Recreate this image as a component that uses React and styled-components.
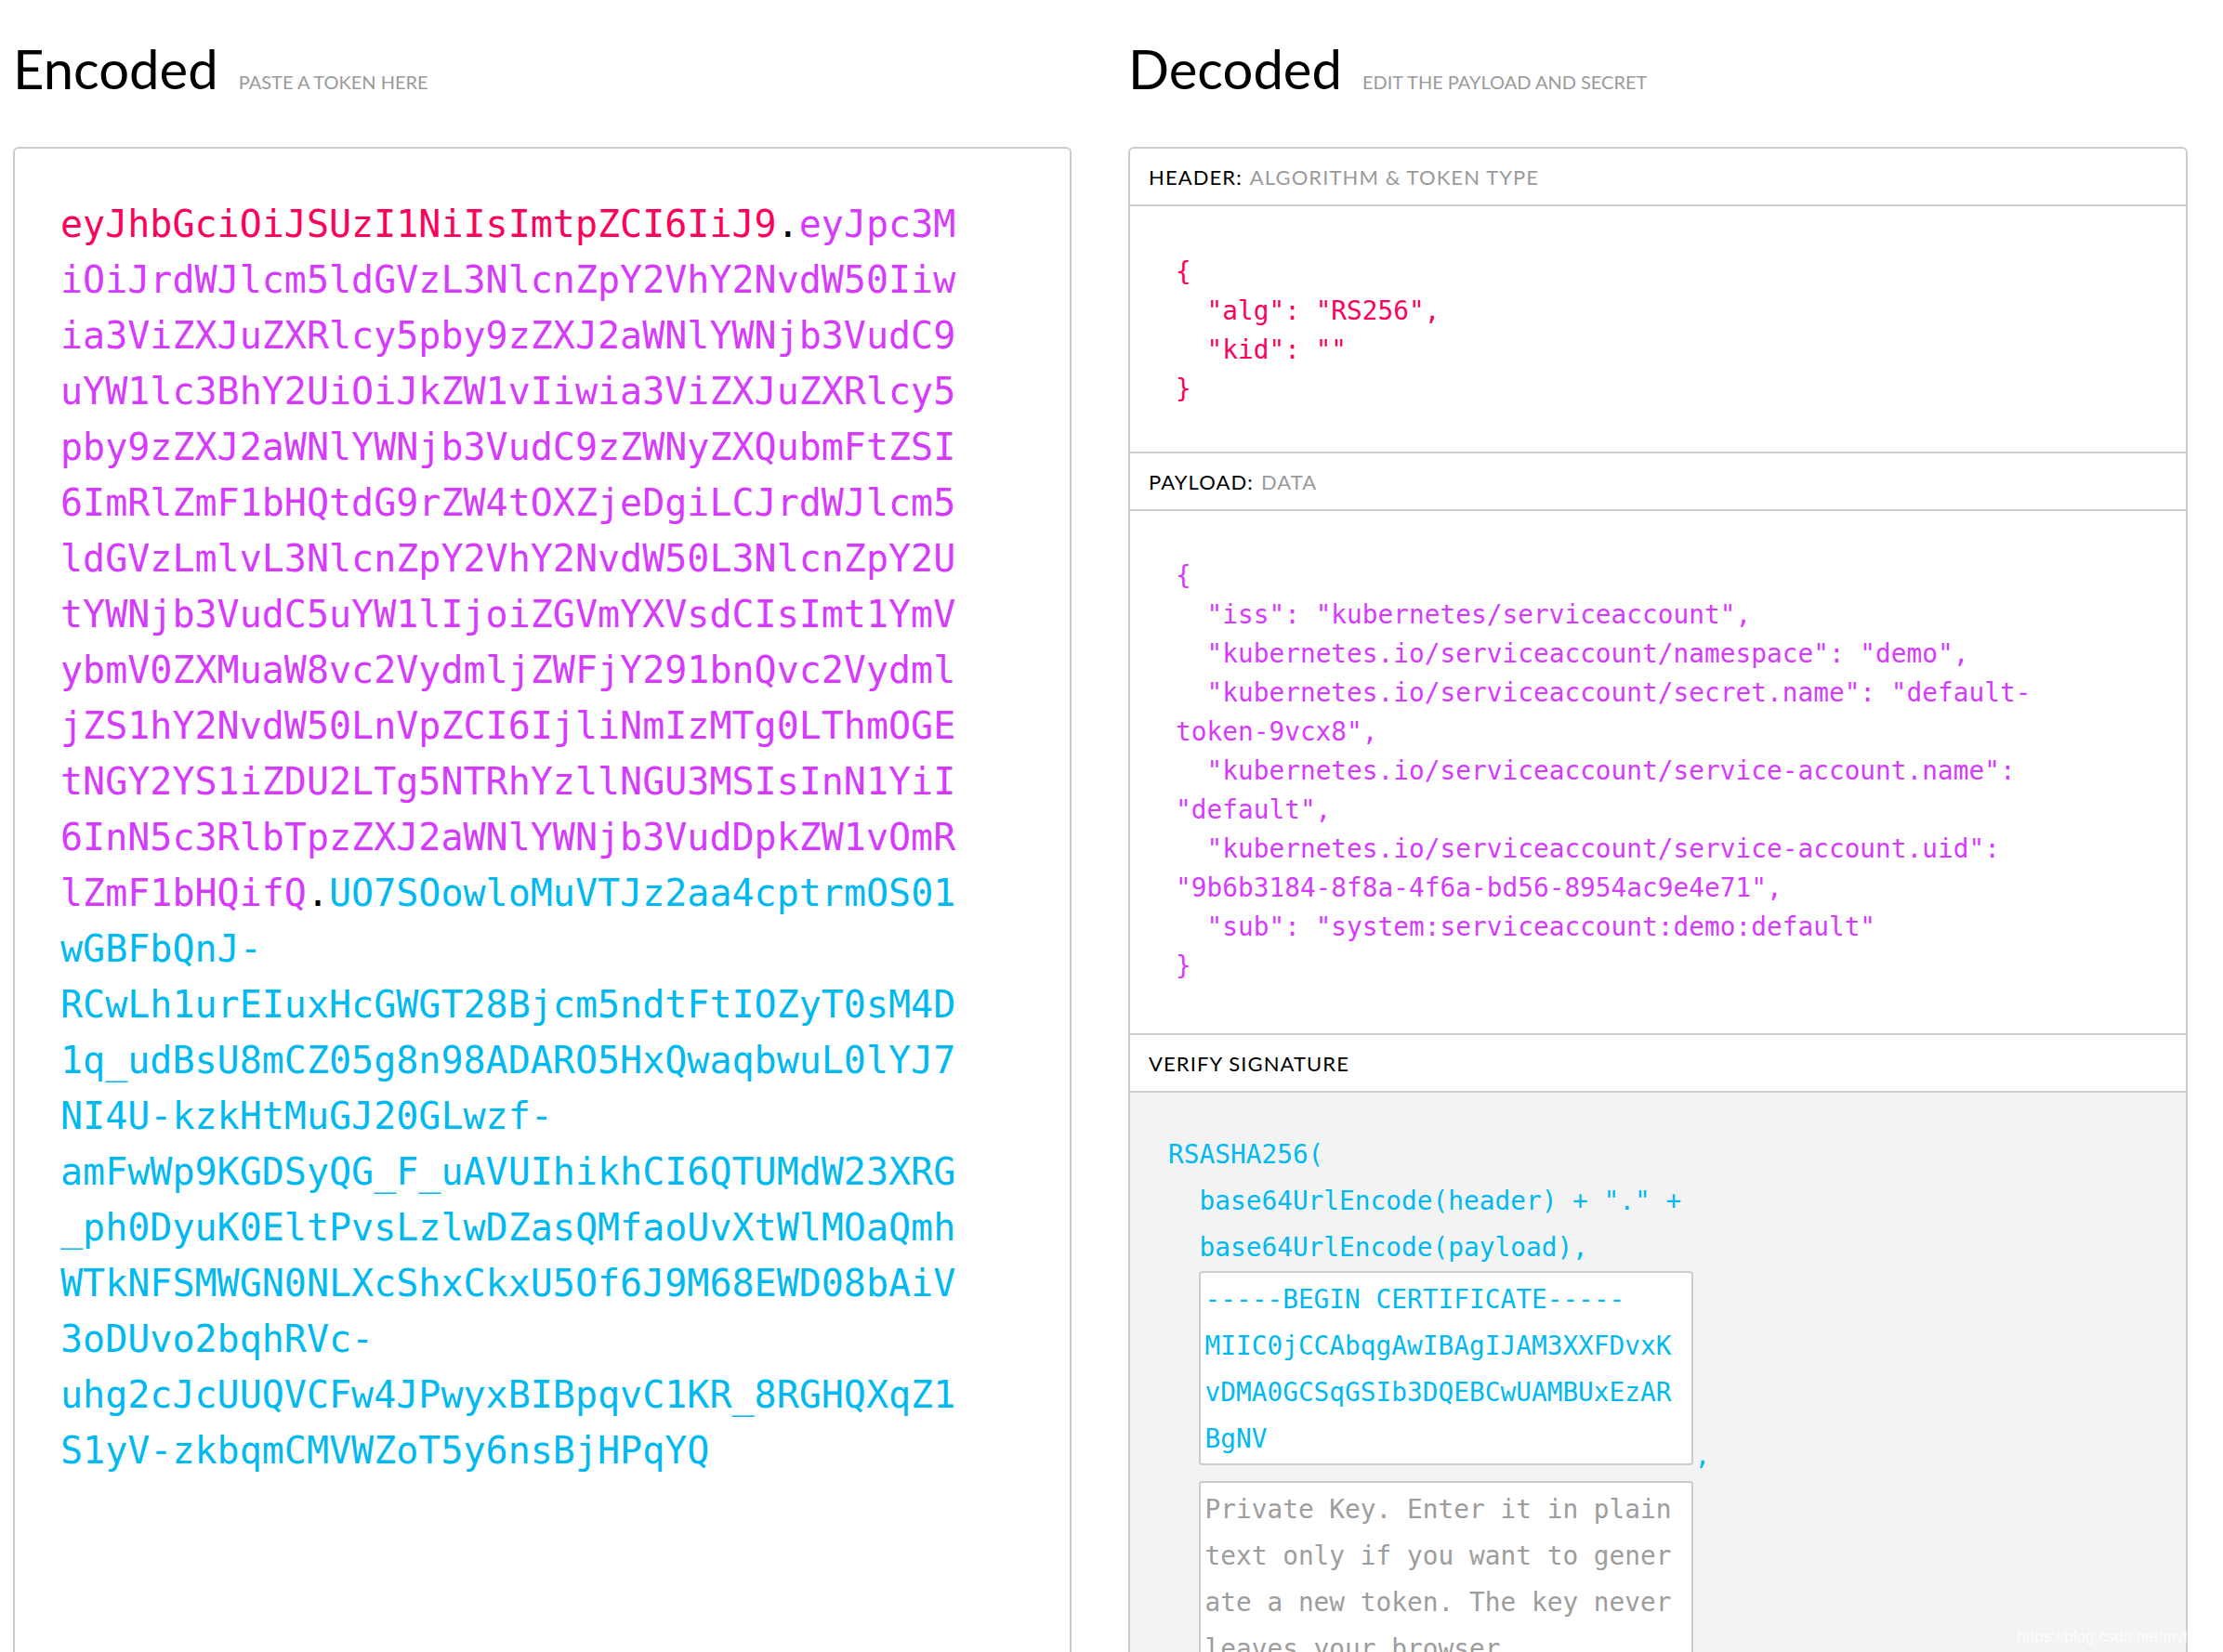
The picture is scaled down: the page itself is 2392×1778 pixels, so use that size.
import React from "react";
import styled, { createGlobalStyle } from "styled-components";

const MONO = `"DejaVu Sans Mono", Menlo, monospace`;
const HEADER_COLOUR = "#fb015b";
const PAYLOAD_COLOUR = "#d63aff";
const SIGNATURE_COLOUR = "#00b9f1";
const LINE_COLOUR = "#cccccc";

const TOKEN_HEADER = "eyJhbGciOiJSUzI1NiIsImtpZCI6IiJ9";
const TOKEN_PAYLOAD =
  "eyJpc3MiOiJrdWJlcm5ldGVzL3NlcnZpY2VhY2NvdW50Iiw" +
  "ia3ViZXJuZXRlcy5pby9zZXJ2aWNlYWNjb3VudC9" +
  "uYW1lc3BhY2UiOiJkZW1vIiwia3ViZXJuZXRlcy5" +
  "pby9zZXJ2aWNlYWNjb3VudC9zZWNyZXQubmFtZSI" +
  "6ImRlZmF1bHQtdG9rZW4tOXZjeDgiLCJrdWJlcm5" +
  "ldGVzLmlvL3NlcnZpY2VhY2NvdW50L3NlcnZpY2U" +
  "tYWNjb3VudC5uYW1lIjoiZGVmYXVsdCIsImt1YmV" +
  "ybmV0ZXMuaW8vc2VydmljZWFjY291bnQvc2Vydml" +
  "jZS1hY2NvdW50LnVpZCI6IjliNmIzMTg0LThmOGE" +
  "tNGY2YS1iZDU2LTg5NTRhYzllNGU3MSIsInN1YiI" +
  "6InN5c3RlbTpzZXJ2aWNlYWNjb3VudDpkZW1vOmR" +
  "lZmF1bHQifQ";
const TOKEN_SIGNATURE =
  "UO7SOowloMuVTJz2aa4cptrmOS01wGBFbQnJ-" +
  "RCwLh1urEIuxHcGWGT28Bjcm5ndtFtIOZyT0sM4D" +
  "1q_udBsU8mCZ05g8n98ADARO5HxQwaqbwuL0lYJ7" +
  "NI4U-kzkHtMuGJ20GLwzf-" +
  "amFwWp9KGDSyQG_F_uAVUIhikhCI6QTUMdW23XRG" +
  "_ph0DyuK0EltPvsLzlwDZasQMfaoUvXtWlMOaQmh" +
  "WTkNFSMWGN0NLXcShxCkxU5Of6J9M68EWD08bAiV" +
  "3oDUvo2bqhRVc-" +
  "uhg2cJcUUQVCFw4JPwyxBIBpqvC1KR_8RGHQXqZ1" +
  "S1yV-zkbqmCMVWZoT5y6nsBjHPqYQ";

const HEADER_JSON = `{
  "alg": "RS256",
  "kid": ""
}`;

const PAYLOAD_JSON = `{
  "iss": "kubernetes/serviceaccount",
  "kubernetes.io/serviceaccount/namespace": "demo",
  "kubernetes.io/serviceaccount/secret.name": "default-token-9vcx8",
  "kubernetes.io/serviceaccount/service-account.name": "default",
  "kubernetes.io/serviceaccount/service-account.uid": "9b6b3184-8f8a-4f6a-bd56-8954ac9e4e71",
  "sub": "system:serviceaccount:demo:default"
}`;

const CERTIFICATE =
  "-----BEGIN CERTIFICATE-----\nMIIC0jCCAbqgAwIBAgIJAM3XXFDvxKvDMA0GCSqGSIb3DQEBCwUAMBUxEzARBgNV";

const KEY_PLACEHOLDER =
  "Private Key. Enter it in plain text only if you want to generate a new token. The key never leaves your browser.";

const GlobalStyle = createGlobalStyle`
  html, body {
    margin: 0;
    padding: 0;
    background: #ffffff;
    overflow: hidden;
  }
  body {
    font-family: Lato, "Open Sans", sans-serif;
    color: #000000;
  }
`;

const Page = styled.div`
  position: relative;
  display: grid;
  grid-template-columns: 1139px 1140px;
  column-gap: 61px;
  padding-left: 14px;
  height: 1778px;
  overflow: hidden;
`;

const Column = styled.section`
  display: flex;
  flex-direction: column;
  min-width: 0;
`;

const TitleRow = styled.div`
  display: flex;
  align-items: baseline;
  gap: 22px;
  height: 158px;
  box-sizing: border-box;
  padding-top: 45px;
`;

const Title = styled.h2`
  margin: 0;
  font-size: 58px;
  font-weight: 400;
  line-height: 1;
`;

const Subtitle = styled.span`
  font-size: 20px;
  color: #9a9a9a;
  text-transform: uppercase;
`;

const Panel = styled.div`
  height: 1700px;
  flex-shrink: 0;
  border: 2px solid ${LINE_COLOUR};
  border-radius: 6px;
  background: #ffffff;
  overflow: hidden;
`;

const EncodedText = styled.div`
  width: 975px;
  padding: 51px 49px;
  font-family: ${MONO};
  font-size: 40px;
  line-height: 60px;
  color: #000000;
  overflow-wrap: break-word;
`;

const Part = styled.span`
  color: ${(props) => props.$colour};
`;

const SectionBar = styled.div`
  display: flex;
  align-items: center;
  gap: 8px;
  height: 60px;
  padding: 0 20px;
  border-bottom: 2px solid ${LINE_COLOUR};
  font-size: 22px;
  letter-spacing: 1.1px;
  text-transform: uppercase;
`;

const BarHint = styled.span`
  color: #9a9a9a;
`;

const JsonBlock = styled.pre`
  margin: 0;
  padding: ${(props) => props.$top}px 120px ${(props) => props.$bottom}px 49px;
  border-bottom: 2px solid ${LINE_COLOUR};
  font-family: ${MONO};
  font-size: 27.8px;
  line-height: 42px;
  white-space: pre-wrap;
  color: ${(props) => props.$colour};
`;

const SignatureArea = styled.div`
  height: 100%;
  padding: 42px 41px;
  background: #f3f3f3;
  font-family: ${MONO};
  font-size: 27.8px;
  line-height: 50px;
  color: ${SIGNATURE_COLOUR};
`;

const SignatureLine = styled.div`
  padding-left: ${(props) => (props.$indent ? "2ch" : "0")};
  white-space: pre;
`;

const KeyRow = styled.div`
  display: flex;
  align-items: flex-end;
  margin-left: 2ch;
  margin-top: ${(props) => (props.$gap ? "17px" : "0")};
`;

const KeyBox = styled.div`
  width: 532px;
  height: ${(props) => props.$height}px;
  box-sizing: border-box;
  padding: 4px 14px 1px 4px;
  border: 2px solid ${LINE_COLOUR};
  border-radius: 4px;
  background: #ffffff;
  overflow: hidden;
  white-space: pre-wrap;
  word-break: break-all;
  color: ${(props) => (props.$placeholder ? "#9d9d9d" : SIGNATURE_COLOUR)};
`;

const Comma = styled.span`
  line-height: 20px;
  margin-left: 1px;
`;

const Watermark = styled.div`
  position: absolute;
  right: 10px;
  bottom: 6px;
  font-family: "Liberation Sans", Arial, sans-serif;
  font-size: 17px;
  color: rgba(255, 255, 255, 0.85);
`;

const App = () => (
  <>
    <GlobalStyle />
    <Page>
      <Column>
        <TitleRow>
          <Title>Encoded</Title>
          <Subtitle>Paste a token here</Subtitle>
        </TitleRow>
        <Panel>
          <EncodedText>
            <Part $colour={HEADER_COLOUR}>{TOKEN_HEADER}</Part>.
            <Part $colour={PAYLOAD_COLOUR}>{TOKEN_PAYLOAD}</Part>.
            <Part $colour={SIGNATURE_COLOUR}>{TOKEN_SIGNATURE}</Part>
          </EncodedText>
        </Panel>
      </Column>
      <Column>
        <TitleRow>
          <Title>Decoded</Title>
          <Subtitle>Edit the payload and secret</Subtitle>
        </TitleRow>
        <Panel>
          <SectionBar>
            Header:<BarHint>Algorithm &amp; token type</BarHint>
          </SectionBar>
          <JsonBlock $colour={HEADER_COLOUR} $top={50} $bottom={46}>
            {HEADER_JSON}
          </JsonBlock>
          <SectionBar>
            Payload:<BarHint>Data</BarHint>
          </SectionBar>
          <JsonBlock $colour={PAYLOAD_COLOUR} $top={49} $bottom={51}>
            {PAYLOAD_JSON}
          </JsonBlock>
          <SectionBar>Verify signature</SectionBar>
          <SignatureArea>
            <SignatureLine>RSASHA256(</SignatureLine>
            <SignatureLine $indent>base64UrlEncode(header) + "." +</SignatureLine>
            <SignatureLine $indent>base64UrlEncode(payload),</SignatureLine>
            <KeyRow>
              <KeyBox $height={209}>{CERTIFICATE}</KeyBox>
              <Comma>,</Comma>
            </KeyRow>
            <KeyRow $gap>
              <KeyBox $height={400} $placeholder>
                {KEY_PLACEHOLDER}
              </KeyBox>
            </KeyRow>
          </SignatureArea>
        </Panel>
      </Column>
      <Watermark>https://blog.csdn.net/myle69</Watermark>
    </Page>
  </>
);

export default App;
